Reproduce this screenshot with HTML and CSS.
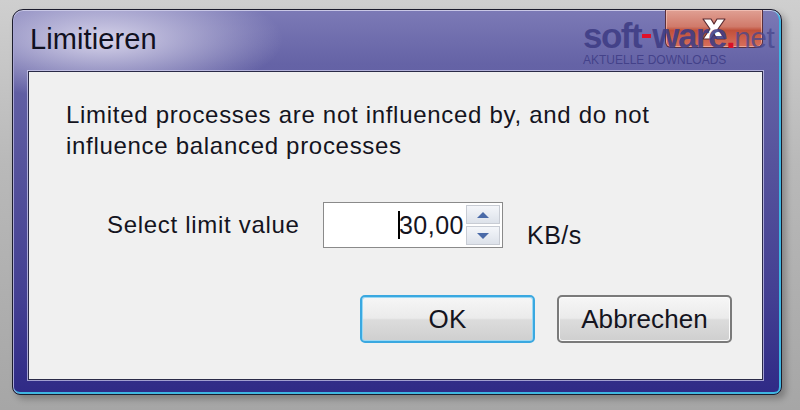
FILE: index.html
```html
<!DOCTYPE html>
<html>
<head>
<meta charset="utf-8">
<link rel="stylesheet" href="styles.css">
</head>
<body>
<div class="window">
  <div class="titlebar">
    <span class="title">Limitieren</span>
    <div class="close">
      <svg width="40" height="26" viewBox="0 0 40 26">
        <path d="M9 3 L17 3 L20 8 L23 3 L31 3 L24 13 L31 23 L23 23 L20 18 L17 23 L9 23 L16 13 Z" fill="#ffffff" stroke="#5a2a30" stroke-width="1.2" stroke-linejoin="round"/>
      </svg>
    </div>
  </div>
  <div class="panel">
    <p class="message">Limited processes are not influenced by, and do not<br>influence balanced processes</p>
    <div class="limit-row">
      <span class="label">Select limit value</span>
      <div class="spinbox">
        <span class="value"><span class="caret"></span>30,00</span>
        <div class="spin">
          <div class="spin-btn"><svg width="14" height="8" viewBox="0 0 14 8"><path d="M7 1 L13 7 L1 7 Z" fill="#4a6aa8"/></svg></div>
          <div class="spin-btn"><svg width="14" height="8" viewBox="0 0 14 8"><path d="M1 1 L13 1 L7 7 Z" fill="#4a6aa8"/></svg></div>
        </div>
      </div>
      <span class="unit">KB/s</span>
    </div>
    <div class="buttons">
      <button class="btn btn-default">OK</button>
      <button class="btn">Abbrechen</button>
    </div>
  </div>
  <div class="watermark">
    <div class="wm-logo"><span class="wm-bold">soft</span><span class="wm-dash"></span><span class="wm-bold">ware</span><span class="wm-dot">.</span><span class="wm-net">net</span></div>
    <div class="wm-sub">AKTUELLE DOWNLOADS</div>
  </div>
</div>
</body>
</html>
```
FILE: styles.css
```css
html, body {
  margin: 0;
  padding: 0;
}
body {
  width: 800px;
  height: 410px;
  overflow: hidden;
  background: linear-gradient(to bottom, #cfcfcf 0%, #b9b9b9 40%, #a6a6a6 100%);
  font-family: "Liberation Sans", Arial, sans-serif;
  padding-top: 9px;
  padding-left: 12px;
  box-sizing: border-box;
}
.window {
  position: relative;
  width: 770px;
  height: 386px;
  box-sizing: border-box;
  border: 1px solid #1c1c2c;
  border-radius: 11px 11px 8px 8px;
  background:
    radial-gradient(ellipse 180px 60px at 90px 30px, rgba(225, 222, 240, 0.9), rgba(225, 222, 240, 0) 100%),
    linear-gradient(to bottom, #7c7ab6 0%, #6563a6 14%, #56539c 40%, #433f92 75%, #2f2a86 100%);
  box-shadow: inset 0 1px 0 #c9c8e6, inset 1px 0 0 #a9a7d4, inset -2px 0 0 #3fb6e2, inset 0 -2px 0 #3fb6e2, 4px 4px 6px rgba(0,0,0,0.25);
  display: flex;
  flex-direction: column;
  padding: 0 18px 14px 15px;
}
.titlebar {
  height: 61px;
  display: flex;
  justify-content: space-between;
  align-items: flex-start;
}
.title {
  margin-top: 13px;
  margin-left: 2px;
  font-size: 29px;
  color: #101020;
  letter-spacing: 0.1px;
}
.close {
  width: 98px;
  height: 38px;
  box-sizing: border-box;
  border: 1px solid #5a2f3c;
  border-top: none;
  border-radius: 0 0 6px 6px;
  background: linear-gradient(to bottom, #e0a094 0%, #d07a6a 45%, #c0503a 55%, #d8705c 100%);
  display: flex;
  justify-content: center;
  align-items: center;
  box-shadow: inset 0 0 0 1px rgba(255, 220, 210, 0.5);
}
.panel {
  flex: 1;
  background: #f0f0f0;
  border: 1px solid #2a2a48;
  box-shadow: 0 0 0 1px rgba(210, 208, 240, 0.7);
  display: flex;
  flex-direction: column;
  padding: 0 0 0 37px;
}
.message {
  margin: 27px 0 0 0;
  font-size: 24px;
  line-height: 31px;
  letter-spacing: 0.7px;
  color: #14141e;
}
.limit-row {
  margin-top: 41px;
  margin-left: 41px;
  display: flex;
  align-items: center;
  height: 46px;
}
.label {
  font-size: 24px;
  letter-spacing: 0.7px;
  color: #14141e;
  width: 216px;
}
.spinbox {
  width: 180px;
  height: 46px;
  box-sizing: border-box;
  border: 1px solid #8a8a8a;
  background: #ffffff;
  display: flex;
  align-items: center;
  justify-content: flex-end;
  padding: 2px;
}
.value {
  font-size: 25px;
  letter-spacing: 0.5px;
  color: #14141e;
  position: relative;
  margin-right: 2px;
}
.caret {
  position: absolute;
  left: -1px;
  top: 0;
  width: 2px;
  height: 28px;
  background: #000;
}
.spin {
  width: 34px;
  height: 40px;
  display: flex;
  flex-direction: column;
  gap: 2px;
}
.spin-btn {
  flex: 1;
  border: 1px solid #c8ccd4;
  background: linear-gradient(to bottom, #f4f6fa, #dde2ea);
  display: flex;
  justify-content: center;
  align-items: center;
}
.unit {
  font-size: 25px;
  letter-spacing: 0.5px;
  color: #14141e;
  margin-left: 24px;
  margin-top: 20px;
}
.buttons {
  margin-top: 47px;
  margin-left: 294px;
  display: flex;
  gap: 22px;
}
.btn {
  width: 175px;
  height: 48px;
  font-family: "Liberation Sans", Arial, sans-serif;
  font-size: 26px;
  letter-spacing: 0.1px;
  color: #14141e;
  border: 2px solid #7a7a7a;
  border-radius: 5px;
  background: linear-gradient(to bottom, #f6f6f6 0%, #ebebeb 48%, #dcdcdc 52%, #cfcfcf 100%);
  box-shadow: inset 0 0 0 1px #fbfbfb;
  padding: 0;
}
.btn-default {
  border-color: #3aa8e0;
  box-shadow: inset 0 0 0 1px #9ad8f4;
}
.watermark {
  position: absolute;
  left: 570px;
  top: 8px;
  pointer-events: none;
}
.wm-logo {
  font-size: 35px;
  line-height: 36px;
  height: 36px;
  display: flex;
  align-items: baseline;
  letter-spacing: -1.5px;
}
.wm-bold {
  font-weight: bold;
  color: rgba(62, 60, 132, 0.88);
}
.wm-dash {
  display: inline-block;
  width: 9px;
  height: 4px;
  background: #e0102a;
  margin: 0 1px;
  align-self: center;
}
.wm-dot {
  color: #d81028;
  font-weight: bold;
}
.wm-net {
  color: rgba(70, 70, 140, 0.75);
  font-family: "Liberation Sans", sans-serif;
  font-size: 30px;
  letter-spacing: -0.5px;
}
.wm-sub {
  font-size: 12px;
  line-height: 14px;
  color: rgba(58, 56, 130, 0.8);
  margin-top: -1px;
}
```
